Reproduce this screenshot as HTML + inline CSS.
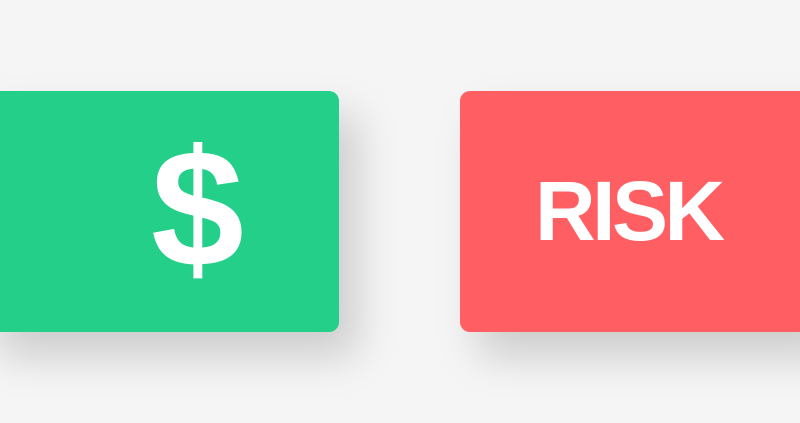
<!DOCTYPE html>
<html><head><style>
html,body{margin:0;padding:0;}
body{width:800px;height:423px;background:#f5f5f5;position:relative;overflow:hidden;font-family:"Liberation Sans",Arial,sans-serif;}
.card{position:absolute;top:91px;height:241px;border-radius:10px;box-shadow:18px 24px 42px rgba(0,0,0,0.17);color:#fff;font-weight:bold;}
.g{left:-20px;width:359px;background:#24cf8a;}
.r{left:460px;width:360px;background:#ff5f63;}
.dol{position:absolute;left:151px;top:126px;font-size:167px;line-height:1;font-weight:bold;color:#fff;}
.risk{position:absolute;left:535px;top:169px;font-size:84px;line-height:1;letter-spacing:-3.5px;font-weight:bold;color:#fff;}
</style></head><body>
<div class="card g"></div>
<div class="card r"></div>
<div class="dol">$</div>
<div class="risk">RISK</div>
</body></html>
